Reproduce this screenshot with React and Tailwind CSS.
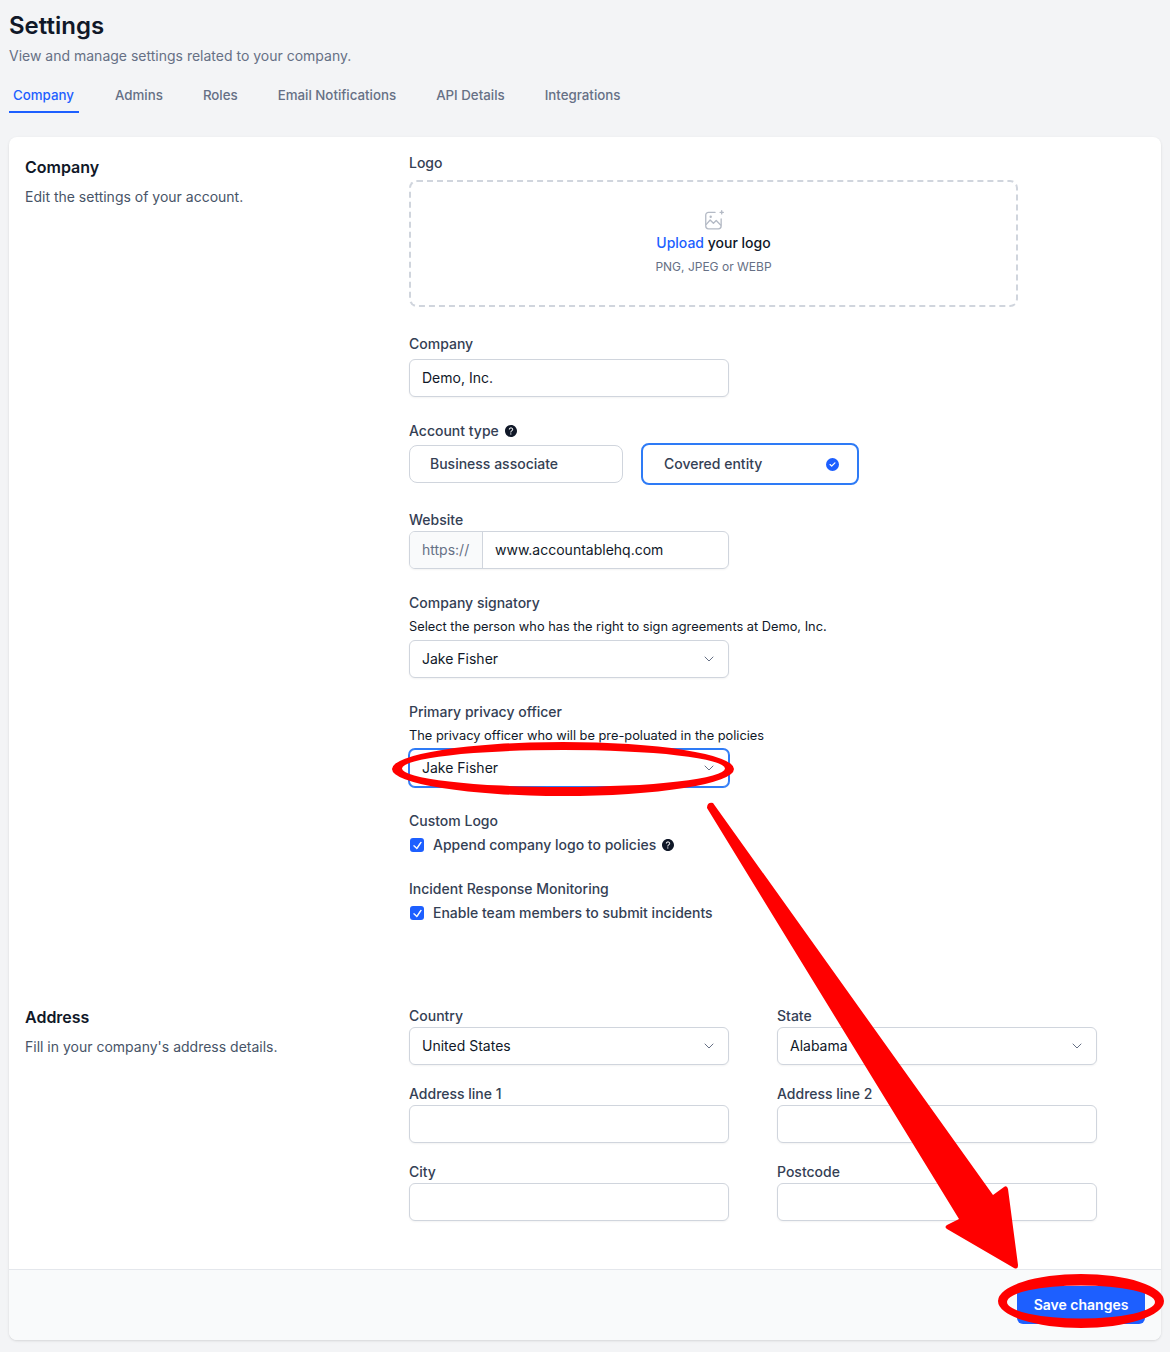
import { ChevronDown } from "lucide-react";
import { HiCheck } from "react-icons/hi2";
import { IoHelpCircle } from "react-icons/io5";
import { FaCircleCheck } from "react-icons/fa6";

const TABS = ["Company", "Admins", "Roles", "Email Notifications", "API Details", "Integrations"];

function Label({ children, className = "" }) {
  return <p className={`text-sm leading-5 font-medium text-[#344054] ${className}`}>{children}</p>;
}

function TextInput({ value, className = "" }) {
  return (
    <div className={`w-80 h-[38px] flex items-center px-3 bg-white border border-[#d0d5dd] rounded-md text-sm text-[#101828] shadow-xs ${className}`}>
      {value}
    </div>
  );
}

function Select({ value, focused }) {
  return (
    <div className={`w-80 h-[38px] flex items-center justify-between pl-3 pr-[11px] bg-white border rounded-md text-sm text-[#101828] shadow-xs ${focused ? "border-[#2e7bf6] ring-1 ring-[#2e7bf6]" : "border-[#d0d5dd]"}`}>
      <span>{value}</span>
      <ChevronDown size={16} strokeWidth={1.5} className="text-[#667085]" />
    </div>
  );
}

function Check({ label, help }) {
  return (
    <div className="flex items-center h-5 mt-[4px]">
      <span className="w-[14px] h-[14px] ml-px mr-[9px] flex items-center justify-center rounded-[3px] bg-[#1d5fff]">
        <HiCheck size={11} strokeWidth={2} className="text-white" />
      </span>
      <span className="text-sm font-medium text-[#344054]">{label}</span>
      {help && <IoHelpCircle size={16} className="ml-[4px] text-[#101828]" />}
    </div>
  );
}

// red marker drawn over the screenshot, the rings are hand drawn so top and bottom differ in weight
function Annotations() {
  return (
    <svg className="absolute inset-0 pointer-events-none" width="1170" height="1352" viewBox="0 0 1170 1352" fill="none">
      <path
        fillRule="evenodd"
        fill="#ff0000"
        d="M392 769a171 27 0 1 0 342 0a171 27 0 1 0 -342 0Z M402 768.500a161.500 18.500 0 1 0 323 0a161.500 18.500 0 1 0 -323 0Z"
      />
      <path
        fillRule="evenodd"
        fill="#ff0000"
        d="M998 1301a83 27 0 1 0 166 0a83 27 0 1 0 -166 0Z M1007 1302a74 16.500 0 1 0 148 0a74 16.500 0 1 0 -148 0Z"
      />
      <path
        d="M707 808 Q707 802 713 803 L993 1195 L1004 1187 Q1007 1185 1008 1189 L1018 1265 Q1018 1270 1014 1268 L947 1229 Q944 1227 947 1225 L959 1219 Z"
        fill="#ff0000"
      />
    </svg>
  );
}

export default function App() {
  return (
    <div className="relative min-h-[1352px] bg-[#f3f4f6] px-[9px] font-['Inter',sans-serif] overflow-hidden">
      <div className="pt-[10px]">
        <h1 className="text-2xl leading-8 font-semibold text-[#101828]">Settings</h1>
        <p className="mt-1 text-sm leading-5 text-[#667085]">View and manage settings related to your company.</p>
        <div className="mt-[19px] flex gap-8">
          {TABS.map((t, i) => (
            <span
              key={t}
              className={`px-1 h-7 text-[13.3px] leading-5 font-medium ${i === 0 ? "w-[70px] text-[#1d5fff] border-b-2 border-[#1d5fff]" : "text-[#667085]"}`}
            >
              {t}
            </span>
          ))}
        </div>
      </div>

      <div className="mt-6 w-[1152px] bg-white rounded-lg shadow-sm overflow-hidden">
        {/* Company */}
        <div className="grid grid-cols-[384px_1fr] px-4 pt-4">
          <div>
            <h2 className="text-base leading-7 font-semibold text-[#101828]">Company</h2>
            <p className="mt-[6px] text-sm leading-5 text-[#475467]">Edit the settings of your account.</p>
          </div>
          <div>
            <Label>Logo</Label>
            <div className="mt-[7px] w-[609px] h-[127px] flex flex-col items-center border-2 border-dashed border-[#d0d5dd] rounded-lg">
              <svg className="mt-[27px]" width="22" height="22" viewBox="0 0 20 20" fill="none" stroke="#b4bac5" strokeWidth="1.2" strokeLinecap="round" strokeLinejoin="round">
                <path d="M11 3H5a2.500 2.500 0 0 0-2.500 2.500v10A2.500 2.500 0 0 0 5 18h9a2.500 2.500 0 0 0 2.500-2.500V9" />
                <path d="M3 14l3.500-4 3 3 2.500-2.500 4 4" />
                <circle cx="7" cy="7" r=".5" />
                <path d="M17 1.500v3M15.500 3h3" />
              </svg>
              <p className="mt-[2px] text-sm leading-5 font-medium text-[#101828]">
                <span className="text-[#1d5fff]">Upload</span> your logo
              </p>
              <p className="mt-[5px] text-xs leading-[18px] text-[#667085]">PNG, JPEG or WEBP</p>
            </div>

            <Label className="mt-[27px]">Company</Label>
            <TextInput className="mt-[5px]" value="Demo, Inc." />

            <div className="mt-6 flex items-center gap-1">
              <Label>Account type</Label>
              <IoHelpCircle size={16} className="text-[#101828]" />
            </div>
            <div className="flex items-center gap-[18px] mt-[2px]">
              <div className="w-[214px] h-[38px] flex items-center pl-5 border border-[#d0d5dd] rounded-lg text-sm font-medium text-[#344054]">
                Business associate
              </div>
              <div className="w-[218px] h-[42px] flex items-center justify-between pl-[21px] pr-[18px] border-2 border-[#2e7bf6] rounded-lg text-sm font-medium text-[#344054]">
                Covered entity
                <FaCircleCheck size={13} className="text-[#1d5fff]" />
              </div>
            </div>

            <Label className="mt-[25px]">Website</Label>
            <div className="mt-px w-80 h-[38px] flex border border-[#d0d5dd] rounded-md overflow-hidden text-sm shadow-xs">
              <span className="w-[73px] flex items-center pl-3 bg-[#f9fafb] border-r border-[#d0d5dd] text-[#667085]">https://</span>
              <span className="flex items-center pl-3 text-[#101828]">www.accountablehq.com</span>
            </div>

            <Label className="mt-6">Company signatory</Label>
            <p className="mt-1 text-[12.8px] leading-5 text-[#101828]">Select the person who has the right to sign agreements at Demo, Inc.</p>
            <div className="mt-[3px]">
              <Select value="Jake Fisher" />
            </div>

            <Label className="mt-6">Primary privacy officer</Label>
            <p className="mt-1 text-[12.8px] leading-5 text-[#101828]">The privacy officer who will be pre-poluated in the policies</p>
            <div className="mt-[3px]">
              <Select value="Jake Fisher" focused />
            </div>

            <Label className="mt-6">Custom Logo</Label>
            <Check label="Append company logo to policies" help />

            <Label className="mt-6">Incident Response Monitoring</Label>
            <Check label="Enable team members to submit incidents" />
          </div>
        </div>

        {/* Address */}
        <div className="grid grid-cols-[384px_1fr] px-4 mt-20">
          <div>
            <h2 className="text-base leading-7 font-semibold text-[#101828]">Address</h2>
            <p className="mt-[6px] text-sm leading-5 text-[#475467]">Fill in your company's address details.</p>
          </div>
          <div className="pt-[3px] grid grid-cols-[320px_320px] gap-x-12 gap-y-[19px]">
            <div>
              <Label>Country</Label>
              <div className="mt-px"><Select value="United States" /></div>
            </div>
            <div>
              <Label>State</Label>
              <div className="mt-px"><Select value="Alabama" /></div>
            </div>
            <div>
              <Label>Address line 1</Label>
              <TextInput className="mt-px" value="" />
            </div>
            <div>
              <Label>Address line 2</Label>
              <TextInput className="mt-px" value="" />
            </div>
            <div>
              <Label>City</Label>
              <TextInput className="mt-px" value="" />
            </div>
            <div>
              <Label>Postcode</Label>
              <TextInput className="mt-px" value="" />
            </div>
          </div>
        </div>

        {/* Footer */}
        <div className="mt-12 h-[71px] flex justify-end items-start pt-4 pr-4 bg-[#f9fafb] border-t border-[#e4e7ec]">
          <button className="w-[128px] h-[38px] rounded-md bg-[#1d5fff] text-sm font-semibold text-white">Save changes</button>
        </div>
      </div>

      <Annotations />
    </div>
  );
}
